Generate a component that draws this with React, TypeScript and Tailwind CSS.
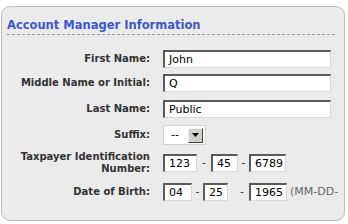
import React from "react";

const font = { fontFamily: '"DejaVu Sans", Verdana, sans-serif' };

const inputCls =
  "h-[18px] bg-white border-solid border-t-2 border-l-2 border-b border-r border-t-[#5a5a5a] border-l-[#5a5a5a] border-b-[#d8d8d8] border-r-[#d8d8d8] pl-[4px] text-[11px] leading-[14px] text-black flex items-center";

function Label({ children }: { children: React.ReactNode }) {
  return (
    <div className="w-[148px] shrink-0 text-right text-[10px] font-bold leading-[12px] text-[#333]">
      {children}
    </div>
  );
}

function Box({ value, w }: { value: string; w: string }) {
  return <div className={`${inputCls} ${w}`}>{value}</div>;
}

function Dash({ w }: { w: string }) {
  return <span className={`text-[11px] text-[#333] text-center ${w}`}>-</span>;
}

export default function App() {
  return (
    <div className="w-[348px] h-[224px] bg-white pt-[6px] pl-[1px]" style={font}>
      <div className="w-[344px] h-[215px] border border-[#bdbdbd] rounded-[9px] bg-[#ebebeb]">
        <div className="pl-[5px] pt-[11px] text-[11.5px] font-bold leading-[14px] text-[#3a58d0]">
          Account Manager Information
        </div>
        <div className="ml-[5px] mr-[8px] mt-[2px] h-px bg-[repeating-linear-gradient(to_right,#9a9a9a_0_3px,transparent_3px_5px)]" />

        <div className="mt-[15px] flex items-center h-[18px]">
          <Label>First Name:</Label>
          <div className="ml-[13px]">
            <Box value="John" w="w-[168px]" />
          </div>
        </div>

        <div className="mt-[6px] flex items-center h-[18px]">
          <Label>Middle Name or Initial:</Label>
          <div className="ml-[13px]">
            <Box value="Q" w="w-[168px]" />
          </div>
        </div>

        <div className="mt-[8px] flex items-center h-[18px]">
          <Label>Last Name:</Label>
          <div className="ml-[13px]">
            <Box value="Public" w="w-[168px]" />
          </div>
        </div>

        <div className="mt-[7px] flex items-center h-[20px]">
          <Label>Suffix:</Label>
          <div className="ml-[13px] w-[43px] h-[20px] bg-white border border-[#d0d0d0] flex items-center pl-[7px] pr-[2px]">
            <span className="text-[11px] text-black flex-1 leading-[12px]">--</span>
            <div className="w-[15px] h-[15px] bg-[#d4d0c8] border-solid border-t border-l border-b border-r border-t-[#f4f4f4] border-l-[#f4f4f4] border-b-[#404040] border-r-[#404040] flex items-center justify-center">
              <svg width="7" height="4" viewBox="0 0 7 4">
                <path d="M0 0h7L3.5 4z" fill="#000" />
              </svg>
            </div>
          </div>
        </div>

        <div className="mt-[9px] flex items-center h-[18px]">
          <Label>
            Taxpayer Identification
            <br />
            Number:
          </Label>
          <div className="ml-[13px] flex items-center">
            <Box value="123" w="w-[34px]" />
            <Dash w="w-[14px]" />
            <Box value="45" w="w-[27px]" />
            <Dash w="w-[11px]" />
            <Box value="6789" w="w-[37px]" />
          </div>
        </div>

        <div className="mt-[11px] flex items-center h-[18px]">
          <Label>Date of Birth:</Label>
          <div className="ml-[13px] flex items-center">
            <Box value="04" w="w-[29px]" />
            <Dash w="w-[11px]" />
            <Box value="25" w="w-[25px]" />
            <span className="text-[11px] text-[#333] w-[21px] pl-[12px]">-</span>
            <Box value="1965" w="w-[38px]" />
            <span className="ml-[3px] text-[11px] text-[#666] whitespace-nowrap">(MM-DD-</span>
          </div>
        </div>
      </div>
    </div>
  );
}
